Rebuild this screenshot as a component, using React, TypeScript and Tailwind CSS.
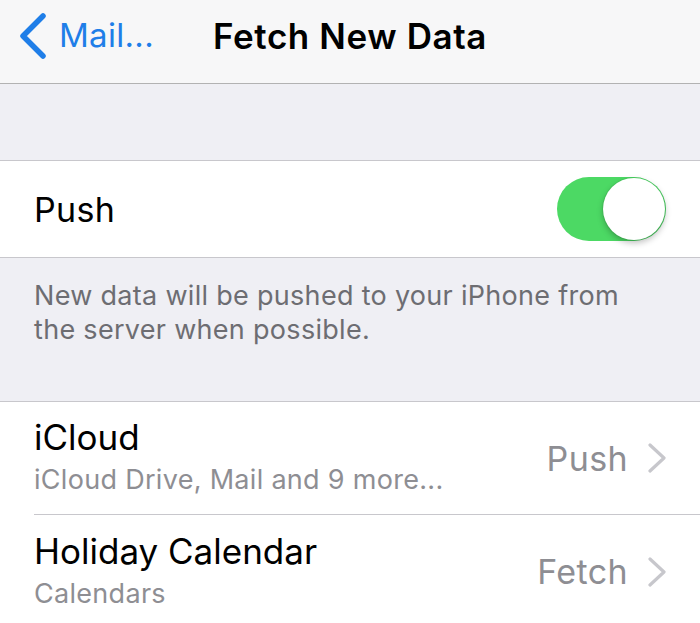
type Account = {
  name: string
  detail: string
  mode: string
}

const accounts: Account[] = [
  { name: 'iCloud', detail: 'iCloud Drive, Mail and 9 more...', mode: 'Push' },
  { name: 'Holiday Calendar', detail: 'Calendars', mode: 'Fetch' },
]

function BackChevron() {
  return (
    <svg width="30" height="46" viewBox="0 0 30 46" fill="none">
      <path d="M26 3 L6 23 L26 43" stroke="#1f7ee8" strokeWidth="5.5" strokeLinecap="round" strokeLinejoin="round" />
    </svg>
  )
}

function Disclosure() {
  return (
    <svg width="20" height="30" viewBox="0 0 20 30" fill="none">
      <path d="M3 2 L17 15 L3 28" stroke="#c7c7cc" strokeWidth="3.2" strokeLinecap="round" strokeLinejoin="round" />
    </svg>
  )
}

function Toggle({ on }: { on: boolean }) {
  return (
    <div className={'relative h-[64px] w-[109px] rounded-full ' + (on ? 'bg-[#4cd964]' : 'bg-[#e5e5ea]')}>
      <div className="absolute right-[1px] top-[1px] h-[62px] w-[62px] rounded-full bg-white shadow-[0_3px_6px_rgba(0,0,0,0.25),0_0_0_1px_rgba(0,0,0,0.06)]" />
    </div>
  )
}

export default function App() {
  return (
    <div className="h-[623px] w-[700px] overflow-hidden bg-[#efeff4] font-['Inter',sans-serif] antialiased">
      {/* Nav bar */}
      <div className="relative flex h-[84px] items-center border-b border-[#b2b2b2] bg-[#f7f7f8] pb-[12px]">
        <div className="flex items-center pl-[17px] text-[33px] tracking-[0.3px] text-[#1f7ee8]">
          <BackChevron />
          <span className="ml-[12px]">Mail...</span>
        </div>
        <div className="absolute inset-x-0 top-0 flex h-[72px] items-center justify-center text-[35px] font-semibold tracking-[0.6px] text-black">
          Fetch New Data
        </div>
      </div>

      <div className="h-[76px]" />

      {/* Push row */}
      <div className="flex h-[98px] items-center justify-between border-y border-[#c8c7cc] bg-white pl-[34px] pr-[34px]">
        <span className="text-[34px] tracking-[0.3px] text-black">Push</span>
        <Toggle on />
      </div>

      <div className="h-[143px] px-[34px] pt-[21px] text-[27px] leading-[34px] tracking-[0.3px] text-[#6d6d72]">
        New data will be pushed to your iPhone from the server when possible.
      </div>

      {/* Accounts */}
      <div className="border-t border-[#c8c7cc] bg-white pl-[34px]">
        {accounts.map((a, i) => (
          <div
            key={a.name}
            className={'flex h-[113px] items-center justify-between pr-[33px] ' + (i < accounts.length - 1 ? 'border-b border-[#c8c7cc]' : '')}
          >
            <div className="flex flex-col">
              <span className="text-[35px] leading-[44px] text-black">{a.name}</span>
              <span className="text-[27px] leading-[42px] tracking-[0.3px] text-[#8e8e93]">{a.detail}</span>
            </div>
            <div className="flex items-center text-[34px] tracking-[0.4px] text-[#8e8e93]">
              <span>{a.mode}</span>
              <span className="ml-[19px] flex">
                <Disclosure />
              </span>
            </div>
          </div>
        ))}
      </div>
    </div>
  )
}
